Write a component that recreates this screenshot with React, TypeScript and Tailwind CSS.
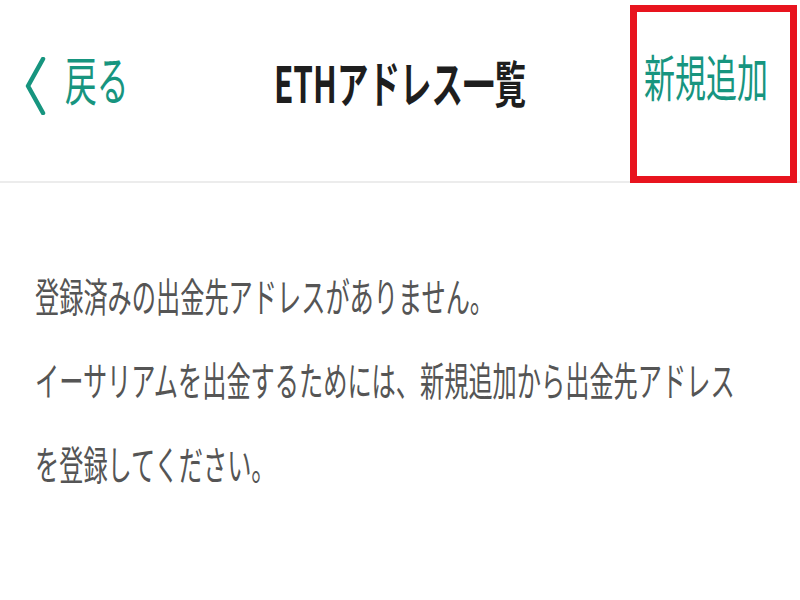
import React from "react";

const jp = { fontFamily: '"Noto Sans CJK JP", "Noto Sans", sans-serif' };

export default function App() {
  return (
    <div className="w-[800px] h-[600px] bg-white overflow-hidden relative" style={jp}>
      {/* header */}
      <div className="relative h-[183px] pb-[10px] border-b-2 border-[#ececec] grid grid-cols-[1fr_260px_1fr] items-center">
        <div className="flex items-center pl-[24px]">
          <svg width="22" height="58" viewBox="0 0 22 58" className="shrink-0">
            <polyline points="19,2 4,29 19,56" fill="none" stroke="#17957f" strokeWidth="4.5" strokeLinecap="round" strokeLinejoin="round" />
          </svg>
          <span className="ml-[19px] mb-[14px] inline-block origin-left scale-x-[0.6] text-[53px] leading-none text-[#17957f] whitespace-nowrap">
            戻る
          </span>
        </div>
        <div className="flex justify-center pb-[10px]">
          <span className="inline-block origin-center scale-x-[0.63] text-[50px] leading-none font-bold text-[#1e1e1e] whitespace-nowrap">
            ETHアドレス一覧
          </span>
        </div>
        <div className="flex justify-end pr-[32px] pb-[22px]">
          <span className="inline-block origin-right scale-x-[0.62] text-[50px] leading-none text-[#17957f] whitespace-nowrap">
            新規追加
          </span>
        </div>
        {/* highlight annotation */}
        <div className="absolute left-[630px] top-[5px] w-[167px] h-[178px] border-[7px] border-[#e8141e] pointer-events-none" />
      </div>

      {/* body */}
      <div className="pt-[70px] pl-[35px] text-[40px] leading-[84px] text-[#555555]">
        <div className="whitespace-nowrap origin-left scale-x-[0.605]">登録済みの出金先アドレスがありません。</div>
        <div className="whitespace-nowrap origin-left scale-x-[0.605]">イーサリアムを出金するためには、新規追加から出金先アドレス</div>
        <div className="whitespace-nowrap origin-left scale-x-[0.605]">を登録してください。</div>
      </div>
    </div>
  );
}
